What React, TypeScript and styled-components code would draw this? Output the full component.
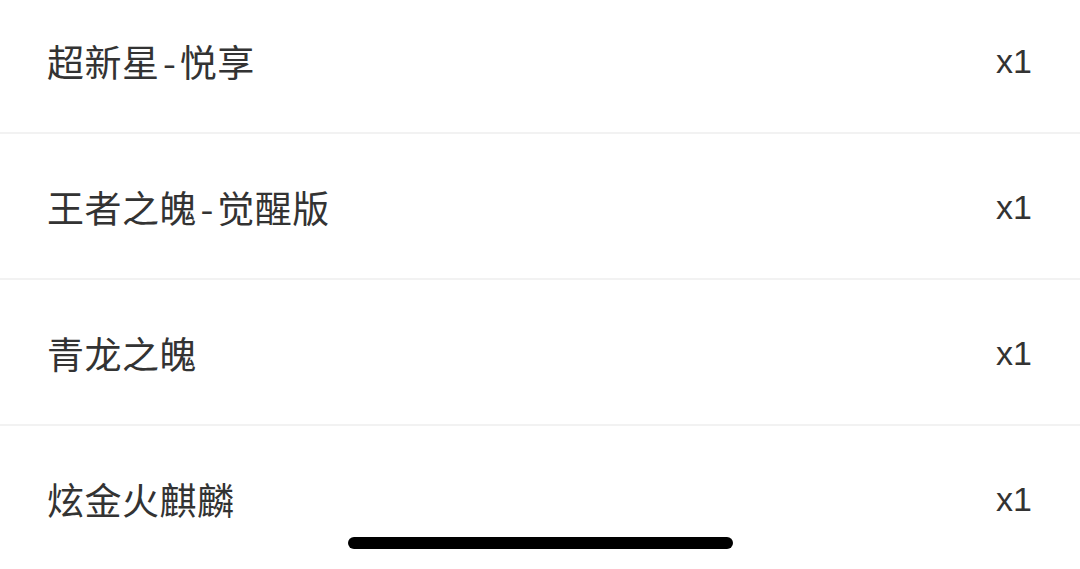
import React from "react";
import styled, { createGlobalStyle } from "styled-components";

const Global = createGlobalStyle`
  html, body { margin: 0; padding: 0; background: #ffffff; }
  body { width: 1080px; height: 569px; overflow: hidden; font-family: "Noto Sans CJK SC", "Noto Sans", sans-serif; }
`;

const Screen = styled.div`
  position: relative;
  width: 1080px;
  height: 569px;
  overflow: hidden;
  background: #ffffff;
`;

const List = styled.div`
  display: flex;
  flex-direction: column;
  margin-top: -12px;
`;

const Row = styled.div`
  display: flex;
  align-items: center;
  justify-content: space-between;
  height: 144px;
  padding: 0 48px 0 47px;
  border-bottom: 2px solid #f2f2f2;
`;

const Name = styled.span`
  font-family: "Noto Sans CJK SC", sans-serif;
  font-size: 37px;
  color: #333333;
  letter-spacing: 0.5px;
  padding-top: 1px;
`;

const Dash = styled.span`
  margin: 0 3.5px;
`;

const Qty = styled.span`
  font-family: "Liberation Sans", "Noto Sans", sans-serif;
  font-size: 34px;
  color: #333333;
  padding-top: 2px;
`;

const HomeIndicator = styled.div`
  position: absolute;
  left: 348px;
  top: 537px;
  width: 385px;
  height: 12px;
  border-radius: 6px;
  background: #000000;
`;

const items = ["超新星-悦享", "王者之魄-觉醒版", "青龙之魄", "炫金火麒麟"];

export default function App() {
  return (
    <Screen>
      <Global />
      <List>
        {items.map((n) => {
          const parts = n.split("-");
          return (
            <Row key={n}>
              <Name>
                {parts.map((p, i) => (
                  <React.Fragment key={i}>
                    {i > 0 && <Dash>-</Dash>}
                    {p}
                  </React.Fragment>
                ))}
              </Name>
              <Qty>x1</Qty>
            </Row>
          );
        })}
      </List>
      <HomeIndicator />
    </Screen>
  );
}
